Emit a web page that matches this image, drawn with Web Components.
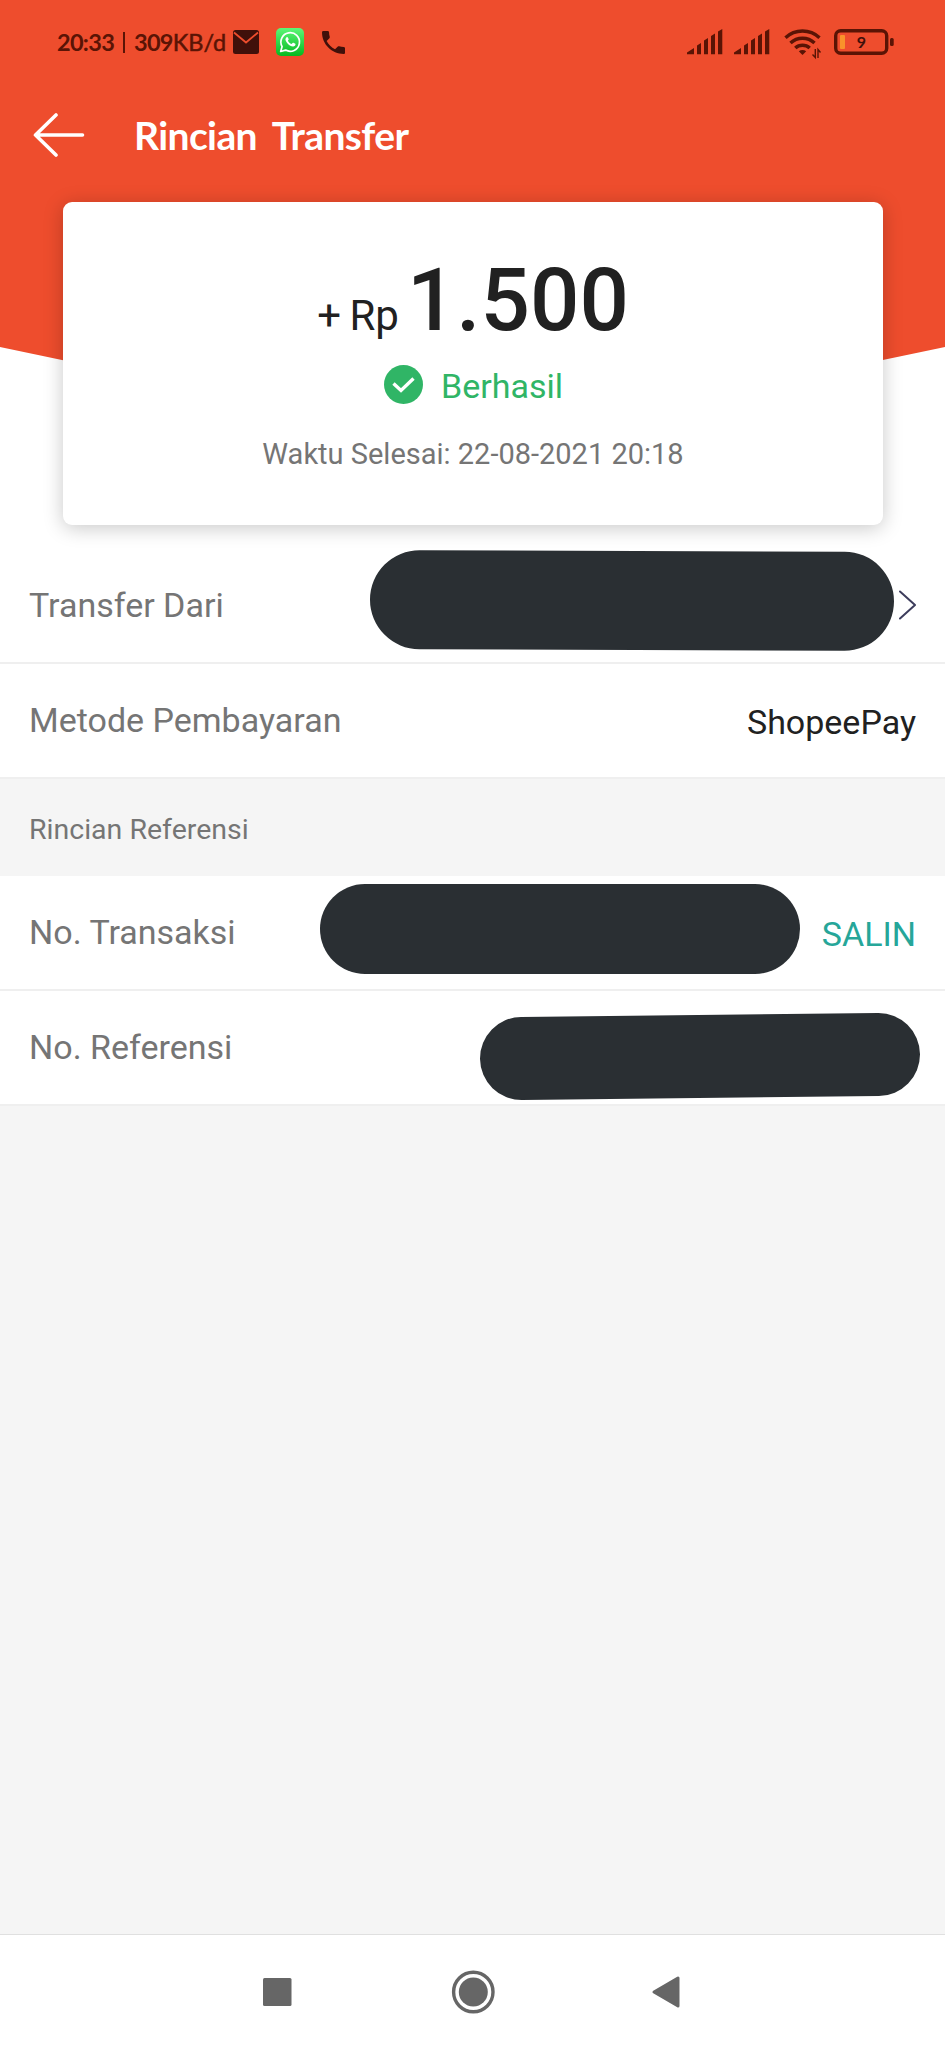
<!DOCTYPE html>
<html lang="id">
<head>
<meta charset="UTF-8">
<meta name="viewport" content="width=device-width, initial-scale=1.0">
<title>Rincian Transfer</title>
<style>
    body {
        margin: 0;
        background-color: #f5f5f5;
        font-family: Roboto, "Liberation Sans", sans-serif;
        color: #212121;
    }
</style>
</head>
<body>
<transfer-screen>
    <status-bar slot="status" time="20:33" speed="309" unit="KB/d" battery="9"></status-bar>
    <title-bar slot="title">Rincian Transfer</title-bar>
    <amount-card slot="card" currency="+ Rp" amount="1.500" status="Berhasil">Waktu Selesai: 22-08-2021 20:18</amount-card>

    <info-row label="Transfer Dari">
        <hidden-value style="--w: 524px; --h: 98.5px; --y: -5.5px; --angle: 0.21deg; margin-right: 5px"></hidden-value>
        <chevron-icon></chevron-icon>
    </info-row>
    <info-row label="Metode Pembayaran">ShopeePay</info-row>
    <section-title>Rincian Referensi</section-title>
    <info-row label="No. Transaksi">
        <hidden-value style="--w: 480px; --h: 90.5px; --y: -3.5px; margin-right: 22px"></hidden-value>
        <copy-link>SALIN</copy-link>
    </info-row>
    <info-row label="No. Referensi">
        <hidden-value style="--w: 440px; --h: 82.5px; --y: 8.5px; --angle: -0.64deg; margin-right: -4px"></hidden-value>
    </info-row>

    <nav-bar slot="nav"></nav-bar>
</transfer-screen>

<script>
// Small base class: every element renders its markup into an open shadow root
class BaseElement extends HTMLElement {
    constructor() {
        super();
        const shadow = this.attachShadow({ mode: 'open' });
        const template = document.createElement('template');
        template.innerHTML = this.render();
        shadow.appendChild(template.content.cloneNode(true));
    }
}

class TransferScreen extends BaseElement {
    render() {
        return `
            <style>
                :host {
                    display: flex;
                    flex-direction: column;
                    height: 2048px;
                    overflow: hidden;
                }
                .hero {
                    position: relative;
                    z-index: 0;
                    height: 549px;
                    background-color: #ffffff;
                }
                .hero::before {
                    content: "";
                    position: absolute;
                    inset: 0;
                    z-index: -1;
                    background-color: #ee4d2d;
                    clip-path: polygon(0 0, 100% 0, 100% 347px, 50% 446px, 0 347px);
                }
                .rows {
                    flex: 1;
                }
            </style>
            <header class="hero">
                <slot name="status"></slot>
                <slot name="title"></slot>
                <slot name="card"></slot>
            </header>
            <main class="rows"><slot></slot></main>
            <slot name="nav"></slot>
        `;
    }
}

class StatusBar extends BaseElement {
    render() {
        const bars = `
            <svg class="signal" width="36" height="26" viewBox="0 0 36 26" fill="#5a1405">
                <path d="M0 25.3V23.5L7 19V25.3ZM10 25.3V16.5L14 14V25.3ZM17 25.3V11.5L21 9V25.3ZM24 25.3V7L28 4.5V25.3ZM31 25.3V2.5L35.3 0V25.3Z"/>
            </svg>`;
        return `
            <style>
                :host {
                    display: flex;
                    align-items: center;
                    justify-content: space-between;
                    box-sizing: border-box;
                    height: 84px;
                    padding: 0 51px 0 57px;
                    color: #5a1405;
                    font: 700 23.5px/28px Lato, sans-serif;
                    letter-spacing: -0.7px;
                }
                .side {
                    display: flex;
                    align-items: center;
                }
                .time { width: 66px; }
                .rule {
                    width: 2px;
                    height: 21px;
                    margin-right: 9px;
                    background-color: #5a1405;
                }
                .speed { width: 99px; }
                .unit {
                    font-weight: 400;
                    letter-spacing: 0;
                    -webkit-text-stroke: 0.5px #5a1405;
                }
                svg { display: block; }
                .signal { margin-right: 11px; }
                .battery text { font: 700 16px Lato, sans-serif; }
            </style>
            <div class="side">
                <span class="time">${this.getAttribute('time')}</span>
                <span class="rule"></span>
                <span class="speed">${this.getAttribute('speed')}<span class="unit">${this.getAttribute('unit')}</span></span>
                <svg width="26" height="24" viewBox="0 0 26 24" style="margin-right: 17px">
                    <rect width="26" height="24" rx="2.5" fill="#40100a"/>
                    <path d="M1 2.5L13 12.5L25 2.5" fill="none" stroke="#ee4d2d" stroke-width="1.8"/>
                </svg>
                <svg width="28" height="28" viewBox="0 0 28 28" style="margin-right: 18px">
                    <defs>
                        <linearGradient id="wa" x1="0" y1="0" x2="0" y2="1">
                            <stop offset="0" stop-color="#5df777"/>
                            <stop offset="1" stop-color="#06b91f"/>
                        </linearGradient>
                    </defs>
                    <rect width="28" height="28" rx="5" fill="url(#wa)"/>
                    <path d="M4.7 23.5L6.1 18.6A9.3 9.3 0 1 1 9.6 22.1Z" fill="none" stroke="#ffffff" stroke-width="1.7" stroke-linejoin="round"/>
                    <path d="M10.6 9.2C11.1 8.8 11.6 8.9 11.9 9.5L12.7 11.3C12.8 11.7 12.2 12.3 11.9 12.7C12.7 14.3 13.8 15.3 15.5 16.1L16.6 14.9C16.9 14.6 17.2 14.7 17.5 14.8L19.3 15.7C19.7 16 19.5 17.2 18.9 17.8C17.8 18.9 16 18.7 13.8 17.4C11.6 16 9.9 13.7 9.5 12C9.3 10.9 9.9 9.8 10.6 9.2Z" fill="#ffffff"/>
                </svg>
                <svg width="23" height="23" viewBox="3 3 18 18" fill="#40100a">
                    <path d="M6.62 10.79c1.44 2.83 3.76 5.14 6.59 6.59l2.2-2.2c.27-.27.67-.36 1.02-.24 1.12.37 2.33.57 3.57.57.55 0 1 .45 1 1V20c0 .55-.45 1-1 1-9.39 0-17-7.61-17-17 0-.55.45-1 1-1h3.5c.55 0 1 .45 1 1 0 1.25.2 2.45.57 3.57.11.35.03.74-.25 1.02l-2.2 2.2z"/>
                </svg>
            </div>
            <div class="side">
                ${bars}
                ${bars}
                <svg width="38" height="32" viewBox="0 0 38 32" style="margin: 4px 12px 0 3px" fill="none" stroke="#5a1405" stroke-width="3.5">
                    <path d="M1.5 9.7A25 25 0 0 1 35.5 9.7M6.5 15A17.5 17.5 0 0 1 30.5 15M11.3 20A10.5 10.5 0 0 1 25.7 20"/>
                    <path d="M14.8 23.3Q18.5 20.6 22.2 23.3L18.5 27Z" fill="#5a1405" stroke="none"/>
                    <path d="M31.3 21V29.5L28.5 26.5M34 30V21.5L36.5 24.5" stroke-width="1.4"/>
                </svg>
                <svg class="battery" width="60" height="26" viewBox="0 0 60 26">
                    <rect x="1.7" y="1.7" width="51" height="22.6" rx="5" fill="none" stroke="#5a1405" stroke-width="3.4"/>
                    <rect x="6" y="6" width="5" height="14" rx="1" fill="#f9932b"/>
                    <rect x="56" y="9" width="3.7" height="8" rx="1.5" fill="#5a1405"/>
                    <text x="27" y="18.7" text-anchor="middle" fill="#40100a">${this.getAttribute('battery')}</text>
                </svg>
            </div>
        `;
    }
}

class TitleBar extends BaseElement {
    render() {
        return `
            <style>
                :host {
                    display: flex;
                    align-items: center;
                    gap: 49px;
                    height: 102px;
                    padding-left: 33px;
                    color: #ffffff;
                    font: 700 39px/48px Lato, sans-serif;
                    letter-spacing: -0.6px;
                    word-spacing: 7px;
                }
            </style>
            <svg width="52" height="44" viewBox="0 0 52 44" fill="none" stroke="#ffffff" stroke-width="3.6" stroke-linecap="round" stroke-linejoin="round">
                <path d="M23 2L2.5 22L23 42M2.5 22H49.5"/>
            </svg>
            <span><slot></slot></span>
        `;
    }
}

class AmountCard extends BaseElement {
    render() {
        return `
            <style>
                :host {
                    display: flex;
                    flex-direction: column;
                    align-items: center;
                    box-sizing: border-box;
                    width: 820px;
                    height: 323px;
                    margin: 16px 0 0 63px;
                    padding-top: 47px;
                    background-color: #ffffff;
                    border-radius: 9px;
                    box-shadow: 0 3px 20px rgba(0, 0, 0, 0.22);
                }
                .amount {
                    display: flex;
                    align-items: baseline;
                    gap: 8px;
                    height: 102px;
                    line-height: 102px;
                    font-size: 87px;
                    font-weight: 500;
                }
                .currency {
                    font-size: 42px;
                    font-weight: 400;
                    word-spacing: -2px;
                }
                .status {
                    display: flex;
                    align-items: center;
                    gap: 18px;
                    height: 40px;
                    margin: 13px 0 0 1px;
                    color: #30b566;
                    font-size: 34px;
                }
                .status span { padding-top: 4px; }
                .date {
                    margin-top: 32px;
                    color: #757575;
                    font-size: 29px;
                    line-height: 36px;
                }
            </style>
            <div class="amount">
                <span class="currency">${this.getAttribute('currency')}</span>
                <span>${this.getAttribute('amount')}</span>
            </div>
            <div class="status">
                <svg width="39" height="39" viewBox="0 0 39 39">
                    <circle cx="19.5" cy="19.5" r="19.5" fill="#30b566"/>
                    <path d="M9.5 18.5L17 25.5L29.5 13.5" fill="none" stroke="#ffffff" stroke-width="3.4"/>
                </svg>
                <span>${this.getAttribute('status')}</span>
            </div>
            <div class="date"><slot></slot></div>
        `;
    }
}

class InfoRow extends BaseElement {
    render() {
        return `
            <style>
                :host {
                    display: flex;
                    align-items: center;
                    justify-content: space-between;
                    box-sizing: border-box;
                    height: 115px;
                    padding: 0 29px;
                    border-bottom: 2px solid #efefef;
                    background-color: #ffffff;
                    font-size: 34px;
                    line-height: 40px;
                }
                .label {
                    padding-bottom: 2px;
                    color: #757575;
                    white-space: nowrap;
                }
                .value {
                    display: flex;
                    align-items: center;
                    height: 40px;
                    padding-top: 3px;
                }
            </style>
            <span class="label">${this.getAttribute('label')}</span>
            <span class="value"><slot></slot></span>
        `;
    }
}

class HiddenValue extends BaseElement {
    render() {
        return `
            <style>
                :host {
                    display: block;
                    flex: none;
                    width: var(--w);
                    height: var(--h);
                    border-radius: 50px;
                    background-color: #2a2f33;
                    transform: translateY(calc(var(--y) - 1.5px)) rotate(var(--angle, 0deg));
                }
            </style>
        `;
    }
}

class ChevronIcon extends BaseElement {
    render() {
        return `
            <style>
                :host { display: block; }
                svg { display: block; margin-bottom: 4px; }
            </style>
            <svg width="17" height="30" viewBox="0 0 17 30" fill="none" stroke="#3d3d5c" stroke-width="2" stroke-linecap="round" stroke-linejoin="round">
                <path d="M1 1.5L16 15L1 28.5"/>
            </svg>
        `;
    }
}

class CopyLink extends BaseElement {
    render() {
        return `
            <style>
                :host {
                    display: block;
                    color: #26a699;
                }
            </style>
            <slot></slot>
        `;
    }
}

class SectionTitle extends BaseElement {
    render() {
        return `
            <style>
                :host {
                    display: flex;
                    align-items: center;
                    box-sizing: border-box;
                    height: 97px;
                    padding: 4px 29px 0;
                    color: #757575;
                    font-size: 28.5px;
                }
            </style>
            <span><slot></slot></span>
        `;
    }
}

class NavBar extends BaseElement {
    render() {
        return `
            <style>
                :host {
                    display: flex;
                    align-items: center;
                    justify-content: center;
                    box-sizing: border-box;
                    height: 114px;
                    padding-right: 2px;
                    border-top: 1px solid #e0e0e0;
                    background-color: #ffffff;
                }
                svg { display: block; }
            </style>
            <svg width="418" height="44" viewBox="0 0 418 44" fill="#666666">
                <rect x="0" y="8" width="28.5" height="28" rx="1.5"/>
                <circle cx="210.3" cy="22" r="14.5"/>
                <circle cx="210.3" cy="22" r="19.7" fill="none" stroke="#666666" stroke-width="3.4"/>
                <path d="M391 22L415 8V36Z" stroke="#666666" stroke-width="3" stroke-linejoin="round"/>
            </svg>
        `;
    }
}

customElements.define('transfer-screen', TransferScreen);
customElements.define('status-bar', StatusBar);
customElements.define('title-bar', TitleBar);
customElements.define('amount-card', AmountCard);
customElements.define('info-row', InfoRow);
customElements.define('hidden-value', HiddenValue);
customElements.define('chevron-icon', ChevronIcon);
customElements.define('copy-link', CopyLink);
customElements.define('section-title', SectionTitle);
customElements.define('nav-bar', NavBar);
</script>
</body>
</html>
